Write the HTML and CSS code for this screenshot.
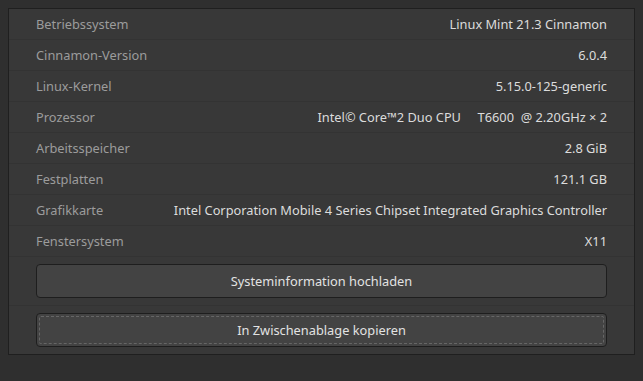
FILE: index.html
```html
<!DOCTYPE html>
<html lang="de">
<head>
  <meta charset="UTF-8" />
  <title>Systeminformationen</title>
  <link rel="stylesheet" href="styles.css">
</head>
<body>
  <div class="panel">
    <div class="row"><span class="label">Betriebssystem</span><span class="value">Linux Mint 21.3 Cinnamon</span></div>
    <div class="row"><span class="label">Cinnamon-Version</span><span class="value">6.0.4</span></div>
    <div class="row"><span class="label">Linux-Kernel</span><span class="value">5.15.0-125-generic</span></div>
    <div class="row"><span class="label">Prozessor</span><span class="value">Intel© Core™2 Duo CPU&nbsp;&nbsp;&nbsp;&nbsp; T6600&nbsp; @ 2.20GHz × 2</span></div>
    <div class="row"><span class="label">Arbeitsspeicher</span><span class="value">2.8 GiB</span></div>
    <div class="row"><span class="label">Festplatten</span><span class="value">121.1 GB</span></div>
    <div class="row"><span class="label">Grafikkarte</span><span class="value">Intel Corporation Mobile 4 Series Chipset Integrated Graphics Controller</span></div>
    <div class="row"><span class="label">Fenstersystem</span><span class="value">X11</span></div>
    <div class="btn-row"><button class="btn">Systeminformation hochladen</button></div>
    <div class="btn-row last"><button class="btn focused">In Zwischenablage kopieren</button></div>
  </div>
</body>
</html>
```
FILE: styles.css
```css
body {
  margin: 0;
  background: #2f2f2f;
  font-family: 'Noto Sans', 'DejaVu Sans', sans-serif;
  font-size: 12.8px;
  padding: 8px;
  height: 381px;
  box-sizing: border-box;
}

.panel {
  width: 627px;
  box-sizing: border-box;
  background: #383838;
  border: 1px solid #1f1f1f;
}

.row {
  display: flex;
  justify-content: space-between;
  align-items: center;
  height: 31px;
  box-sizing: border-box;
  padding: 0 27px 0 27px;
  border-bottom: 1px solid #333333;
}

.label {
  color: #9c9c9c;
}

.value {
  color: #dcdcdc;
}

.btn-row {
  padding: 7px 27px 7px 27px;
  border-bottom: 1px solid #333333;
}

.btn-row.last {
  border-bottom: none;
  padding-bottom: 7px;
}

.btn {
  display: block;
  width: 100%;
  height: 34px;
  background: #434343;
  border: 1px solid #1e1e1e;
  border-radius: 4px;
  color: #e2e2e2;
  font-family: inherit;
  font-size: 12.8px;
  position: relative;
}

.btn.focused::after {
  content: "";
  position: absolute;
  inset: 2px;
  border: 1px dashed #666666;
  border-radius: 2px;
}
```
